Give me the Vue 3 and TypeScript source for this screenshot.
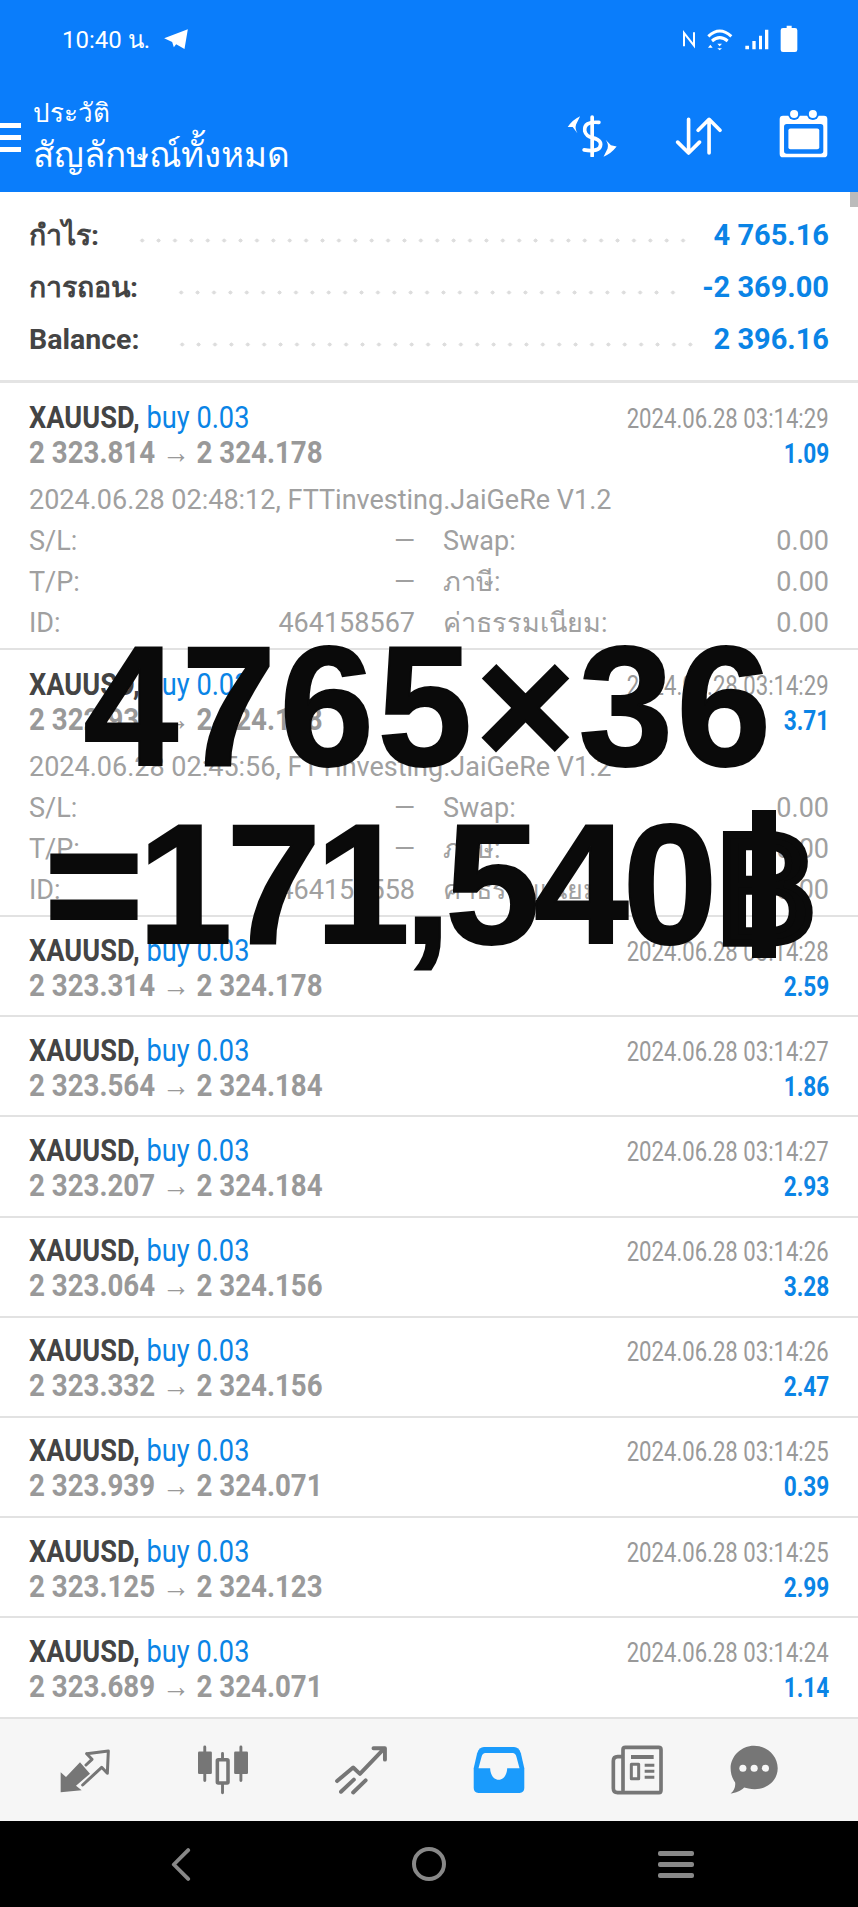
<script setup lang="ts">
interface Trade {
  from: string;
  to: string;
  closed: string;
  profit: string;
  opened?: string;
  id?: string;
}

const summary = [
  { label: "กำไร:", value: "4 765.16" },
  { label: "การถอน:", value: "-2 369.00" },
  { label: "Balance:", value: "2 396.16" },
];

const trades: Trade[] = [
  { from: "2 323.814", to: "2 324.178", closed: "2024.06.28 03:14:29", profit: "1.09", opened: "2024.06.28 02:48:12", id: "464158567" },
  { from: "2 322.939", to: "2 324.178", closed: "2024.06.28 03:14:29", profit: "3.71", opened: "2024.06.28 02:45:56", id: "464158558" },
  { from: "2 323.314", to: "2 324.178", closed: "2024.06.28 03:14:28", profit: "2.59" },
  { from: "2 323.564", to: "2 324.184", closed: "2024.06.28 03:14:27", profit: "1.86" },
  { from: "2 323.207", to: "2 324.184", closed: "2024.06.28 03:14:27", profit: "2.93" },
  { from: "2 323.064", to: "2 324.156", closed: "2024.06.28 03:14:26", profit: "3.28" },
  { from: "2 323.332", to: "2 324.156", closed: "2024.06.28 03:14:26", profit: "2.47" },
  { from: "2 323.939", to: "2 324.071", closed: "2024.06.28 03:14:25", profit: "0.39" },
  { from: "2 323.125", to: "2 324.123", closed: "2024.06.28 03:14:25", profit: "2.99" },
  { from: "2 323.689", to: "2 324.071", closed: "2024.06.28 03:14:24", profit: "1.14" },
];
</script>

<template>
  <div class="phone">
    <header class="appbar">
      <div class="status">
        <span class="time">10:40 น.</span>
        <svg class="plane" viewBox="345 40 80 66"><path d="M348 71 419 44 409 103 384 89 377 98 372 82Z" /></svg>
        <svg class="sys" viewBox="60 28 360 84">
          <path class="thin" d="M72 92V52L102 90V50" />
          <path class="wifi" d="M145 62Q179 30 214 62M156 76Q179 56 203 76" />
          <path class="fill" d="M172 84H186L179 92ZM144 96 151 87 158 96ZM172 98H186L179 104Z" />
          <path class="fill" d="M256 90h11v11h-11zM277 76h10v25h-10zM297 60h9v41h-9zM315 42h10v59h-10z" />
          <path class="fill" d="M380 30h15v7h10q7 0 7 7v58q0 7-7 7h-36q-7 0-7-7V44q0-7 7-7h11z" />
        </svg>
      </div>
      <div class="titlebar">
        <div class="burger"><i></i><i></i><i></i></div>
        <div class="titles">
          <div class="sub">ประวัติ</div>
          <div class="title">สัญลักษณ์ทั้งหมด</div>
        </div>
        <div class="actions">
          <svg class="act-dollar" viewBox="80 70 155 125">
            <path class="w" d="M158 76V192" />
            <path class="w" d="M178 92Q132 88 136 118Q140 134 160 138Q192 146 180 168Q168 180 134 174" />
            <path class="wf" d="M85 106Q100 84 122 74L110 98Q106 110 114 124L100 106ZM231 164Q214 186 192 194L204 170Q208 158 198 144L214 160Z" />
          </svg>
          <svg class="act-sort" viewBox="405 75 140 115">
            <path class="w" d="M445 82V184M412 151 445 184 478 151M507 184V82M474 115 507 82 540 115" />
          </svg>
          <svg class="act-cal" viewBox="718 58 146 146">
            <rect class="wf" x="720" y="78" width="142" height="124" rx="10" />
            <rect class="bf" x="733" y="103" width="117" height="88" rx="8" />
            <rect class="wf" x="746" y="116" width="92" height="62" rx="6" />
            <circle class="bf" cx="763" cy="73" r="18" />
            <circle class="bf" cx="819" cy="73" r="18" />
            <circle class="wf" cx="763" cy="73" r="12" />
            <circle class="wf" cx="819" cy="73" r="12" />
          </svg>
        </div>
      </div>
    </header>

    <main class="content">
      <section class="summary">
        <div v-for="s in summary" :key="s.label" class="sum-row">
          <span class="sum-label">{{ s.label }}</span>
          <span class="dots"></span>
          <span class="sum-value">{{ s.value }}</span>
        </div>
      </section>

      <article v-for="t in trades" :key="t.from" class="trade" :class="{ open: t.id }">
        <div class="line">
          <span class="head">XAUUSD, <em>buy 0.03</em></span>
          <span class="closed">{{ t.closed }}</span>
        </div>
        <div class="line">
          <span class="prices">{{ t.from }} <small>→</small> {{ t.to }}</span>
          <span class="profit">{{ t.profit }}</span>
        </div>
        <template v-if="t.id">
          <div class="meta">{{ t.opened }}, FTTinvesting.JaiGeRe V1.2</div>
          <div class="details">
            <span>S/L:</span><span class="r">—</span><span>Swap:</span><span class="r">0.00</span>
            <span>T/P:</span><span class="r">—</span><span>ภาษี:</span><span class="r">0.00</span>
            <span>ID:</span><span class="r">{{ t.id }}</span><span>ค่าธรรมเนียม:</span><span class="r">0.00</span>
          </div>
        </template>
      </article>

      <div class="scrollbar"></div>
      <div class="caption">
        <div class="cap-a">4765×36</div>
        <div class="cap-b">=171,540<span class="baht">฿</span></div>
      </div>
    </main>

    <nav class="tabs">
      <svg viewBox="55 30 160 150">
        <path class="gf" d="M62 172V112L78 126 120 82 150 116 108 152 125 166Z" />
        <path class="gs" d="M140 56 205 48 202 115 185 97 128 150M140 56 156 73 138 90" />
      </svg>
      <svg viewBox="465 30 165 155">
        <path class="gs" d="M491 36V140M603 36V140M546 56V178" />
        <rect class="gf" x="470" y="50" width="43" height="70" rx="4" />
        <rect class="gf" x="582" y="50" width="43" height="70" rx="4" />
        <rect class="hole" x="530" y="76" width="33" height="72" rx="3" />
      </svg>
      <svg viewBox="45 35 150 140">
        <path class="gs thick" d="M53 136 98 98 117 116 180 50M155 44H187V76M64 166 100 132M98 168 133 134" />
      </svg>
      <svg viewBox="455 35 158 140">
        <path class="blue" d="M490 38H578Q592 38 598 56L608 100V158Q608 172 594 172H474Q460 172 460 158V100L470 56Q476 38 490 38Z" />
        <path class="cut" d="M494 55H574Q582 55 585 66L594 100H558C556 145 510 145 508 100H474L483 66Q486 55 494 55Z" />
      </svg>
      <svg viewBox="60 30 160 150">
        <path class="gs thick" d="M98 65H82Q69 65 69 78V160Q69 173 82 173H206Q212 173 212 165V44Q212 37 205 37H105Q98 37 98 44V166" />
        <path class="gf" d="M122 60h68v12h-68zM163 86h29v9h-29zM163 104h29v9h-29zM163 122h29v9h-29z" />
        <rect class="gs" x="123" y="88" width="22" height="43" />
      </svg>
      <svg viewBox="415 28 155 155">
        <path class="gf" d="M493 30C533 30 566 62 566 100S533 165 495 165C480 165 470 162 462 160 452 170 436 178 420 178 430 170 436 158 434 144 425 132 420 116 420 100 420 62 453 30 493 30Z" />
        <circle class="dot" cx="458" cy="100" r="11" />
        <circle class="dot" cx="493" cy="100" r="11" />
        <circle class="dot" cx="528" cy="100" r="11" />
      </svg>
    </nav>

    <footer class="sysnav">
      <svg class="back" viewBox="0 0 24 34"><path d="M20 2 5 17 20 32" /></svg>
      <span class="home"></span>
      <span class="menu"><i></i><i></i><i></i></span>
    </footer>
  </div>
</template>

<style scoped>
.phone { width: 858px; height: 1907px; display: flex; flex-direction: column; background: #fff; font-family: Roboto, "Noto Sans", sans-serif; overflow: hidden; }

.appbar { height: 192px; flex: none; background: #0a7dfb; color: #fff; display: flex; flex-direction: column; }
.status { height: 80px; flex: none; display: flex; align-items: center; padding: 0 58px 2px 62px; box-sizing: border-box; }
.time { font-size: 24px; }
.plane { width: 27px; height: 22px; margin-left: 13px; fill: #fff; }
.sys { width: 120px; height: 28px; margin-left: auto; fill: #fff; }
.sys .thin { fill: none; stroke: #fff; stroke-width: 6; }
.sys .wifi { fill: none; stroke: #fff; stroke-width: 9; }
.titlebar { flex: 1; display: flex; align-items: center; padding-right: 30px; }
.burger { width: 21px; display: flex; flex-direction: column; gap: 7px; margin-top: 3px; }
.burger i { height: 5px; background: #fff; }
.titles { margin-left: 12px; margin-top: 2px; }
.sub { font-size: 26px; line-height: 38px; }
.title { font-size: 35px; line-height: 48px; }
.actions { margin-left: auto; display: flex; align-items: center; }
.actions svg { display: block; }
.act-dollar { width: 52px; height: 42px; }
.act-sort { width: 47px; height: 38px; margin-left: 57px; }
.act-cal { width: 49px; height: 49px; margin-left: 57px; margin-top: -6px; }
.w { fill: none; stroke: #fff; stroke-width: 11; stroke-linecap: round; stroke-linejoin: round; }
.wf { fill: #fff; }
.bf { fill: #0a7dfb; }

.content { position: relative; flex: 1; display: flex; flex-direction: column; min-height: 0; }
.summary { height: 191px; flex: none; padding: 17px 29px 0; border-bottom: 3px solid #e4e4e4; box-sizing: border-box; }
.sum-row { height: 52px; display: flex; align-items: center; }
.sum-label { font-size: 28.5px; font-weight: 700; color: #444; }
.sum-value { font-size: 29px; font-weight: 700; color: #0a84e6; }
.dots { flex: 1; height: 5px; margin: 10px 20px 0 35px; background: radial-gradient(circle, #ddd 1.8px, transparent 2.2px) 0 0 / 16.4px 5px repeat-x; }

.trade { height: 100.2px; flex: none; box-sizing: border-box; padding: 15px 29px 0; border-bottom: 2px solid #e2e2e2; }
.trade.open { height: 267px; padding-top: 16px; }
.line { display: flex; justify-content: space-between; align-items: center; height: 35px; }
.head, .prices, .closed, .profit { display: inline-block; white-space: pre; }
.head { font-size: 32px; font-weight: 700; color: #444; transform: scaleX(0.85); transform-origin: left center; }
.head em { font-style: normal; font-weight: 400; color: #0a84e6; }
.closed { font-size: 28px; color: #999; margin-top: 3px; transform: scaleX(0.79); transform-origin: right center; }
.prices { font-size: 32px; font-weight: 700; color: #999; transform: scaleX(0.865); transform-origin: left center; }
.prices small { font-size: 32px; font-weight: 400; line-height: 1; }
.profit { font-size: 28px; font-weight: 700; color: #0a84e6; margin-top: 3px; transform: scaleX(0.81); transform-origin: right center; }
.meta { font-size: 27px; color: #a0a0a0; margin-top: 14px; line-height: 34px; }
.details { display: grid; grid-template-columns: 193px 193px 1fr auto; font-size: 27px; color: #a0a0a0; line-height: 41px; margin-top: 4px; }
.details span:nth-child(4n + 3) { padding-left: 28px; }
.r { text-align: right; }

.scrollbar { position: absolute; top: 0; right: 0; width: 8px; height: 15px; background: #bbb; }
.caption { position: absolute; top: 425px; left: 0; right: 0; text-align: center; font-family: "Liberation Sans", sans-serif; font-weight: 700; font-size: 170px; line-height: 178px; color: #0a0a0a; -webkit-text-stroke: 2px #0a0a0a; }
.cap-a { letter-spacing: 3.5px; }
.cap-b { letter-spacing: -5.8px; }
.baht { position: relative; display: inline-block; clip-path: inset(15px -10px 15px -10px); }
.baht::after { content: ""; position: absolute; left: 40px; top: 15px; bottom: 15px; width: 24px; background: #0a0a0a; }

.tabs { height: 103px; flex: none; background: #f6f6f6; display: grid; grid-template-columns: repeat(5, 138px) 96px; padding-left: 16px; align-items: center; justify-items: center; }
.tabs svg { width: 54px; height: 50px; }
.gf { fill: #767676; }
.gs { fill: none; stroke: #767676; stroke-width: 9; stroke-linecap: round; stroke-linejoin: round; }
.gs.thick { stroke-width: 11; }
.hole { fill: #f6f6f6; stroke: #767676; stroke-width: 11; }
.blue { fill: #1a9bfc; }
.cut { fill: #f6f6f6; }
.dot { fill: #f6f6f6; }

.sysnav { height: 86px; flex: none; background: #000; position: relative; }
.back { position: absolute; left: 169px; top: 27px; width: 23px; height: 33px; fill: none; stroke: #888; stroke-width: 4; stroke-linecap: round; stroke-linejoin: round; }
.home { position: absolute; left: 412px; top: 26px; width: 34px; height: 34px; box-sizing: border-box; border: 4px solid #888; border-radius: 50%; }
.menu { position: absolute; left: 658px; top: 30px; width: 36px; display: flex; flex-direction: column; gap: 6px; }
.menu i { height: 5px; background: #888; border-radius: 2px; }
</style>
